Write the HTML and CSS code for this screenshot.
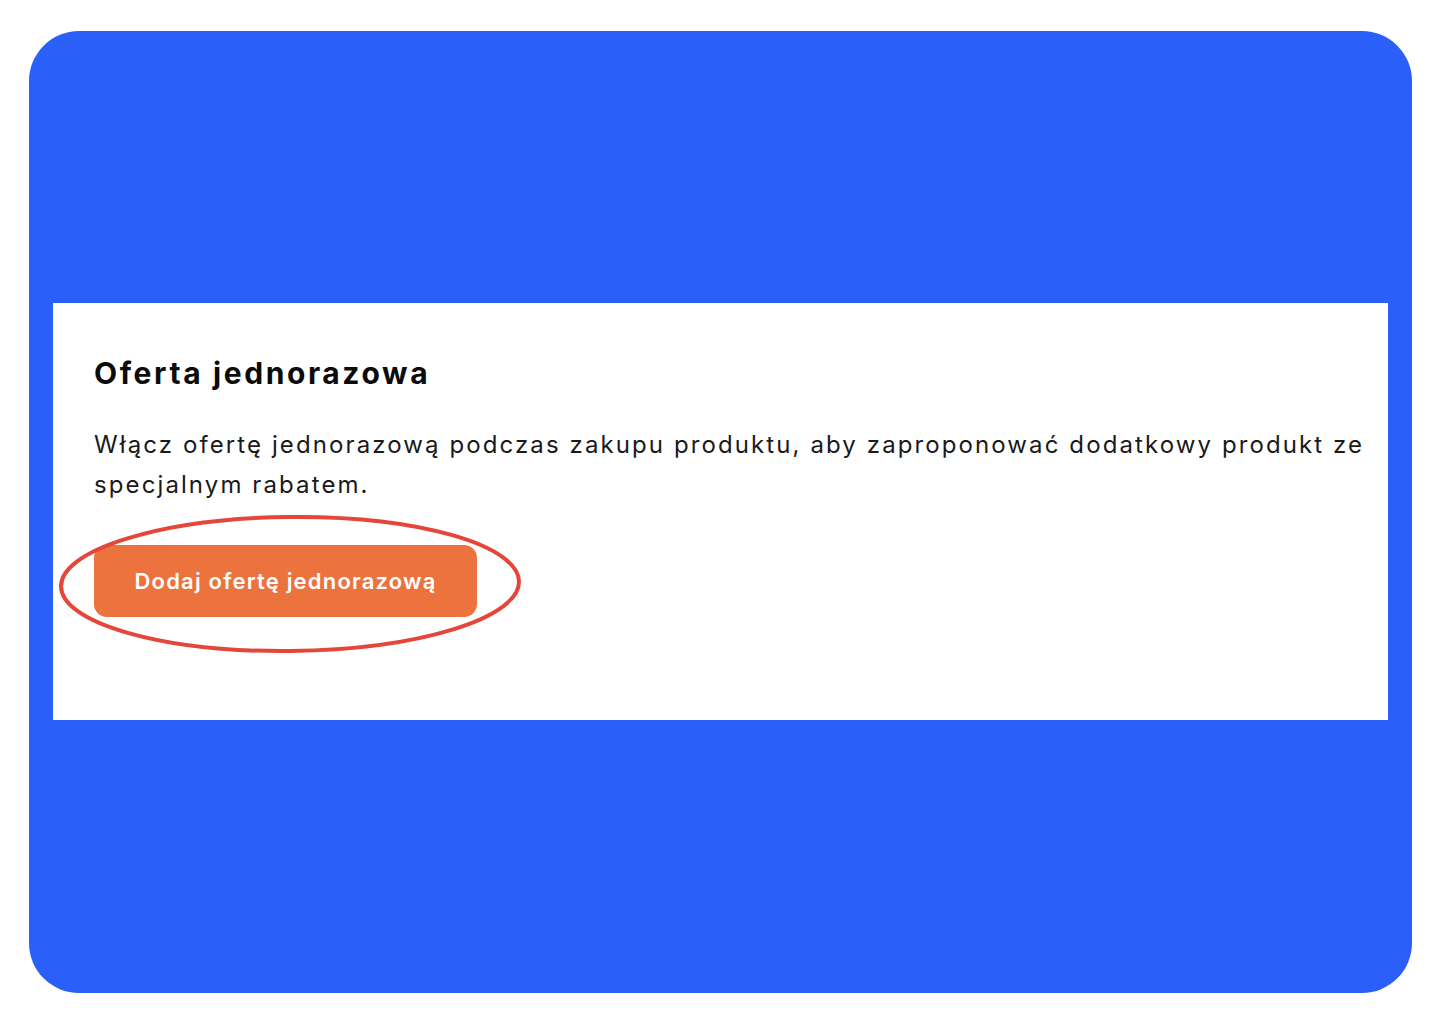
FILE: index.html
```html
<!DOCTYPE html>
<html lang="pl">
<head>
<meta charset="utf-8">
<title>Oferta jednorazowa</title>
<link rel="stylesheet" href="styles.css">
</head>
<body>
<div class="frame">
  <section class="panel">
    <h2 class="title">Oferta jednorazowa</h2>
    <p class="desc">Włącz ofertę jednorazową podczas zakupu produktu, aby zaproponować dodatkowy produkt ze specjalnym rabatem.</p>
    <div class="btn-wrap">
      <button class="btn" type="button">Dodaj ofertę jednorazową</button>
      <svg class="circle" width="466" height="142" viewBox="0 0 466 142" aria-hidden="true">
        <ellipse cx="233" cy="71" rx="229" ry="67" fill="none" stroke="#e4463a" stroke-width="4" transform="rotate(-0.6 233 71)"/>
      </svg>
    </div>
  </section>
</div>
</body>
</html>
```
FILE: styles.css
```css
html, body {
  margin: 0;
  padding: 0;
  background: #ffffff;
}
body {
  font-family: Inter, "Open Sans", "Liberation Sans", sans-serif;
  color: #111111;
}
.frame {
  box-sizing: border-box;
  margin: 31px 28px 0 29px;
  height: 962px;
  background: #2b5ff9;
  border-radius: 50px;
  padding: 272px 24px 0 24px;
}
.panel {
  box-sizing: border-box;
  height: 417px;
  background: #ffffff;
  padding: 50px 0 0 41px;
}
.title {
  margin: 0;
  font-size: 30px;
  line-height: 40px;
  font-weight: 700;
  letter-spacing: 2.6px;
  color: #0b0b0b;
}
.desc {
  margin: 32px 0 0 0;
  font-size: 24px;
  line-height: 40px;
  font-weight: 400;
  letter-spacing: 2.1px;
  color: #1a1a1a;
}
.btn-wrap {
  position: relative;
  display: inline-block;
  margin-top: 40px;
}
.btn {
  display: block;
  width: 383px;
  height: 72px;
  border: 0;
  border-radius: 13px;
  background: #ec723e;
  color: #ffffff;
  font-family: inherit;
  font-size: 22px;
  font-weight: 600;
  letter-spacing: 1.2px;
  padding: 0;
  cursor: pointer;
}
.circle {
  position: absolute;
  left: -37px;
  top: -32px;
  pointer-events: none;
}
```
